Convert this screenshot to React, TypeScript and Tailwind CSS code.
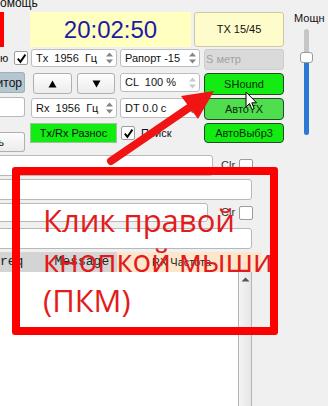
import React from "react";

const Check = ({ checked, className = "" }: { checked?: boolean; className?: string }) => (
  <div
    className={`w-[14px] h-[14px] shrink-0 bg-white border border-[#9c9c9c] rounded-[2px] flex items-center justify-center ${className}`}
  >
    {checked && (
      <svg width="11" height="11" viewBox="0 0 11 11">
        <path d="M1.8 5.6 L4.4 8.8 L9.4 1.6" fill="none" stroke="#000" strokeWidth="1.9" />
      </svg>
    )}
  </div>
);

const SpinArrows = ({ dim }: { dim?: boolean }) => (
  <svg width="9" height="14" viewBox="0 0 9 14" className="mr-[2px] shrink-0">
    <path d="M1 5.5 L4.5 1.5 L8 5.5Z M1 8.5 L4.5 12.5 L8 8.5Z" fill={dim ? "#c9c9c9" : "#858585"} />
  </svg>
);

const Spin = ({ text, className = "", dim }: { text: string; className?: string; dim?: boolean }) => (
  <div className={`flex items-center bg-white border border-[#bdbdbd] rounded-[3px] pl-[4px] ${className}`}>
    <span className="flex-1 whitespace-pre">{text}</span>
    <SpinArrows dim={dim} />
  </div>
);

const GreenBtn = ({ label, className = "" }: { label: string; className?: string }) => (
  <div
    className={`flex items-center justify-center rounded-[4px] border border-[#264a26] text-[#0e2a0e] ${className}`}
  >
    {label}
  </div>
);

const ArrowBtn = ({ up, className = "" }: { up?: boolean; className?: string }) => (
  <div
    className={`flex items-center justify-center rounded-[3px] border border-[#b0b0b0] bg-gradient-to-b from-[#fefefe] to-[#ececec] ${className}`}
  >
    <svg width="9" height="8" viewBox="0 0 9 8">
      <path d={up ? "M0.5 7.5 L4.5 0.5 L8.5 7.5Z" : "M0.5 0.5 L4.5 7.5 L8.5 0.5Z"} fill="#000" />
    </svg>
  </div>
);

const Field = ({ className = "" }: { className?: string }) => (
  <div className={`bg-white border border-[#b8b8b8] rounded-[3px] ${className}`} />
);

export default function App() {
  return (
    <div className="relative w-[328px] h-[406px] overflow-hidden bg-[#f0f0f0] text-[11px] text-[#111] font-['Liberation_Sans',Arial,sans-serif]">
      {/* menu bar, cut at the top */}
      <div className="h-[12px] overflow-hidden">
        <span className="block -mt-[4px] text-[12px] leading-[14px]">омощь</span>
      </div>

      <div className="flex">
        <div className="w-[284px] flex flex-col">
          {/* clock row */}
          <div className="flex h-[35px]">
            <div className="w-[4px] bg-[#ff0000]" />
            <div className="ml-[26px] w-[161px] bg-[#ffffbf] flex items-center justify-center text-[24px] text-[#1b1ba6]">
              20:02:50
            </div>
            <div className="ml-[3px] w-[90px] rounded-[3px] border border-[#cbc9a4] bg-[#fffccc] flex items-center justify-center">
              TX 15/45
            </div>
          </div>

          {/* Tx / Рапорт */}
          <div className="flex items-start mt-[2px]">
            <div className="w-[28px] h-[18px] flex items-center">
              <span className="w-[8px]">ю</span>
              <Check checked className="ml-[6px]" />
            </div>
            <Spin text="Tx  1956  Гц" className="ml-[3px] w-[86px] h-[18px]" />
            <Spin text="Рапорт -15" className="ml-[3px] w-[80px] h-[18px]" />
            <div className="ml-[4px] w-[80px] h-[21px] rounded-[3px] border border-[#cdcdcd] bg-[#dadada] text-[#a2a2a2] flex items-center pl-[1px]">
              S метр
            </div>
          </div>

          {/* arrows / CL */}
          <div className="flex items-start mt-[3px]">
            <div className="w-[25px] h-[21px] -mt-[1px] rounded-r-[3px] border border-l-0 border-[#9fb0ba] bg-[#b4c6d0] flex items-center justify-end pr-[2px] overflow-hidden whitespace-nowrap text-[12px]">
              Монитор
            </div>
            <ArrowBtn up className="ml-[8px] w-[39px] h-[21px]" />
            <ArrowBtn className="ml-[5px] w-[38px] h-[21px]" />
            <Spin text="CL  100 %" dim className="ml-[5px] w-[80px] h-[19px]" />
            <GreenBtn label="SHound" className="ml-[4px] w-[80px] h-[22px] bg-[#12ec12]" />
          </div>

          {/* Rx / DT */}
          <div className="flex items-start mt-[3px]">
            <div className="w-[25px] h-[20px] -mt-[1px] bg-white border border-l-0 border-[#b8b8b8] rounded-r-[3px]" />
            <Spin text="Rx  1956  Гц" className="ml-[6px] w-[86px] h-[20px]" />
            <Spin text="DT 0.0 с" className="ml-[3px] w-[80px] h-[20px]" />
            <GreenBtn label="АвтоТХ" className="ml-[4px] w-[80px] h-[22px] bg-[#4ede4e]" />
          </div>

          {/* Разнос / Поиск */}
          <div className="flex items-start mt-[3px]">
            <div className="w-[25px] h-[20px] mt-[9px] rounded-r-[3px] border border-l-0 border-[#b0b0b0] bg-gradient-to-b from-[#fdfdfd] to-[#ececec] flex items-center justify-end pr-[20px] overflow-hidden whitespace-nowrap">
              Стереть
            </div>
            <div className="ml-[5px] w-[87px] h-[20px] bg-[#12ec12] border border-[#9ac69a] flex items-center justify-center">
              Tx/Rx Разнос
            </div>
            <div className="w-[83px] h-[20px] flex items-center pl-[4px]">
              <Check checked />
              <span className="ml-[6px]">Поиск</span>
            </div>
            <GreenBtn label="АвтоВыбр3" className="ml-[4px] w-[80px] h-[20px] bg-[#12ec12]" />
          </div>
        </div>

        {/* power slider */}
        <div className="flex-1 flex flex-col">
          <span className="pl-[10px] leading-[13px]">Мощн</span>
          <div className="ml-[16px] w-[13px] mt-[4px] flex flex-col items-center">
            <div className="w-[5px] h-[23px] bg-[#c6c6c6] rounded-t-[3px]" />
            <div className="w-[13px] h-[11px] bg-white border border-[#9a9a9a] rounded-[3px]" />
            <div className="w-[5px] h-[72px] bg-[#2a7ad4] rounded-b-[3px]" />
          </div>
        </div>
      </div>

      {/* lower panel */}
      <div className="flex flex-col mt-[3px]">
        <div className="flex items-center h-[21px]">
          <Field className="-ml-[4px] w-[217px] h-full" />
          <span className="ml-[8px] w-[18px] text-[#333]">Clr</span>
          <Check />
        </div>
        <Field className="mt-[3px] -ml-[4px] w-[256px] h-[21px]" />
        <div className="flex items-center h-[19px] mt-[3px]">
          <Field className="-ml-[4px] w-[212px] h-full" />
          <span className="ml-[13px] w-[18px] text-[#333]">Clr</span>
          <Check />
        </div>
        <Field className="mt-[6px] -ml-[4px] w-[256px] h-[21px]" />

        <div className="flex h-[20px] mt-[3px]">
          <div className="w-[117px] bg-[#d4d4d4] flex items-center font-['Liberation_Mono',monospace] text-[13px] text-[#222] whitespace-pre">
            {"req    Message"}
          </div>
          <div className="w-[145px] bg-[#fde6cc] flex items-center pl-[35px] text-[#222]">RX Частота</div>
        </div>

        <div className="flex h-[140px]">
          <div className="w-[238px] bg-white" />
          <div className="w-[14px] border-x border-[#b4b4b4] bg-gradient-to-r from-[#f4f4f4] to-[#e6e6e6] flex justify-center pt-[5px]">
            <svg width="9" height="5" viewBox="0 0 9 5">
              <path d="M0.5 4.5 L4.5 0.5 L8.5 4.5Z" fill="#555" />
            </svg>
          </div>
        </div>
      </div>

      {/* annotation overlay */}
      <div className="absolute left-[12px] top-[167px] w-[266px] h-[168px] border-[8px] border-[#ff0000] rounded-[3px]" />
      <div className="absolute left-[43px] top-[200px] text-[31px] leading-[40px] text-[#e21b1b] font-['Open_Sans',sans-serif] whitespace-nowrap">
        <div>Клик правой</div>
        <div>кнопкой мыши</div>
        <div>(ПКМ)</div>
      </div>
      <svg className="absolute left-0 top-0" width="328" height="406" viewBox="0 0 328 406">
        <line x1="111" y1="161" x2="196" y2="103" stroke="#f01414" strokeWidth="8" strokeLinecap="round" />
        <polygon points="214,91 181,96 198,119" fill="#f01414" />
      </svg>
      <svg className="absolute left-[245px] top-[91px]" width="14" height="21" viewBox="0 0 14 21">
        <path
          d="M1 1 L1 16 L4.5 12.5 L7 18.5 L9.2 17.6 L6.8 11.8 L11.5 11.8 Z"
          fill="#fff"
          stroke="#000"
          strokeWidth="1"
          strokeLinejoin="round"
        />
      </svg>
    </div>
  );
}
